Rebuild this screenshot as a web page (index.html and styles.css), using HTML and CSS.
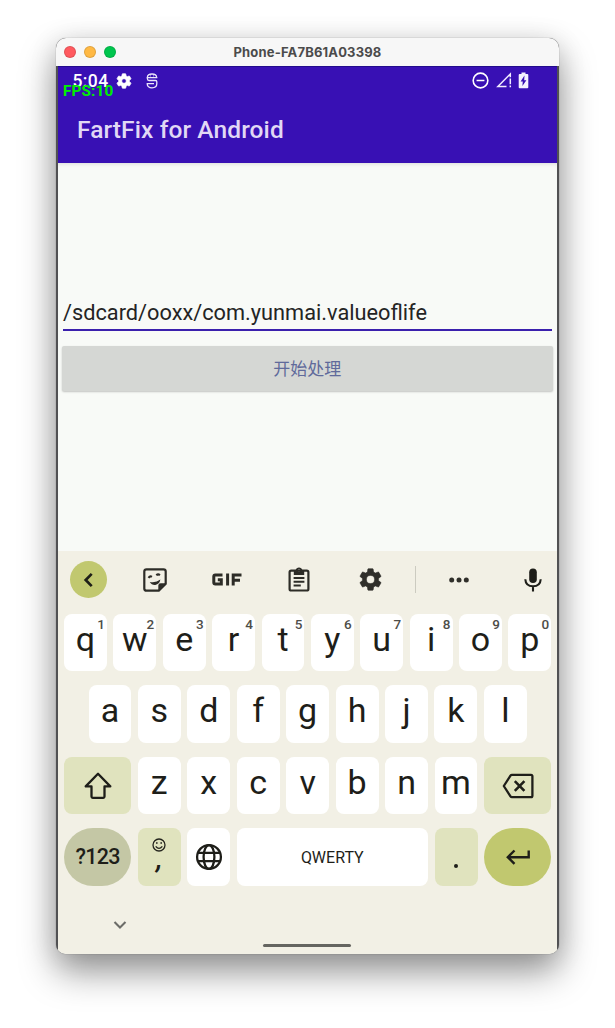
FILE: index.html
```html
<!DOCTYPE html>
<html lang="zh">
<head>
<meta charset="utf-8">
<title>Phone-FA7B61A03398</title>
<link rel="stylesheet" href="styles.css">
</head>
<body>
<main class="window">
  <header class="titlebar">
    <div class="lights"><i class="light red"></i><i class="light amber"></i><i class="light green"></i></div>
    <div class="window-title">Phone-FA7B61A03398</div>
  </header>
  <div class="screen">
    <section class="appbar">
      <div class="status">
        <span class="clock">5:04</span>
        <svg class="st-gear" width="18" height="18" viewBox="0 0 24 24"><path fill="#fff" d="M19.14 12.94c.04-.3.06-.61.06-.94s-.02-.64-.07-.94l2.03-1.58c.18-.14.23-.41.12-.61l-1.92-3.32c-.12-.22-.37-.29-.59-.22l-2.39.96c-.5-.38-1.03-.7-1.62-.94L14.4 2.81c-.04-.24-.24-.41-.48-.41h-3.84c-.24 0-.43.17-.47.41L9.25 5.35c-.59.24-1.13.57-1.62.94l-2.39-.96c-.22-.08-.47 0-.59.22L2.74 8.87c-.12.21-.08.47.12.61l2.03 1.58c-.05.3-.09.63-.09.94s.02.64.07.94l-2.03 1.58c-.18.14-.23.41-.12.61l1.92 3.32c.12.22.37.29.59.22l2.39-.96c.5.38 1.03.7 1.62.94l.36 2.54c.05.24.24.41.48.41h3.84c.24 0 .44-.17.47-.41l.36-2.54c.59-.24 1.13-.56 1.62-.94l2.39.96c.22.08.47 0 .59-.22l1.92-3.32c.12-.22.07-.47-.12-.61l-2.01-1.58zM12 15.1A3.1 3.1 0 1 1 12 8.900a3.100 3.100 0 0 1 0 6.200z" stroke="#fff"/></svg>
        <svg class="st-s" width="12" height="16" viewBox="0 0 12 16" fill="none" stroke="#ece6fa" stroke-width="1.3"><path d="M10.6 4.700V4.200C10.600 2.200 9 1 6 1S1.400 2.200 1.400 4.200v1.600c0 1 .6 1.700 1.600 1.700h6.600c.8 0 1.200.5 1.200 1.300v2c0 2.600-2 4-4.800 4s-4.800-1.400-4.800-4.100M.6 4.700h10.800M.6 10.700h7.400"/><path d="M4 2.900h.8M7.200 2.900H8" stroke-width="1"/></svg>
        <span class="status-right">
          <svg width="17" height="17" viewBox="0 0 16 16" fill="none" stroke="#fff" stroke-width="1.500"><circle cx="8" cy="8" r="6.900"/><path d="M4.300 8h7.400"/></svg>
          <svg width="16" height="16" viewBox="0 0 16 16" fill="none" stroke="#f1ecff" stroke-width="1.500"><path d="M10.500 14.500H1.900L14.300 2v3.300M14.300 6.500v5.700M14.300 13.500v1.700"/></svg>
          <svg width="11" height="17" viewBox="0 0 10 17"><path fill="#f5f1ff" d="M3 .5h4V2h1.800q1 0 1 1v12.200q0 1-1 1H1.200q-1 0-1-1V3q0-1 1-1H3z"/><path fill="#3810b4" d="M6 3.500 2.100 9.600h2.200L3.900 14 7.900 8.200H5.700z"/></svg>
        </span>
        <span class="fps">FPS:10</span>
      </div>
      <h1 class="app-title">FartFix for Android</h1>
    </section>
    <section class="content">
      <div class="field">/sdcard/ooxx/com.yunmai.valueoflife</div>
      <div class="button">开始处理</div>
    </section>
    <section class="keyboard">
      <div class="tools">
        <span class="back"><svg width="36" height="36" viewBox="0 0 36 36" fill="none" stroke="#1e1e18" stroke-width="2.700"><path d="m20.700 11.900-6 6.100 6 6.100"/></svg></span>
        <svg class="t-sticker" width="24" height="24" viewBox="0 0 24 24"><path d="M3.500 1.300h17q2.200 0 2.200 2.200v12.300l-6.900 6.900H3.500q-2.200 0-2.200-2.200v-17q0-2.200 2.200-2.200z" fill="none" stroke="#2d2c27" stroke-width="2.200"/><path d="M22.500 15.300h-4.800q-2.400 0-2.400 2.400v4.800z" fill="#2d2c27"/><path d="M5.500 9.800q1.600-2.200 3.400-1M13.300 7.300q1.800-1.700 3.600-.1" fill="none" stroke="#2d2c27" stroke-width="2.100"/><path d="M6.800 13.900q6 1.200 10.600-2.300-1 4.900-5.100 5.300-3.800.2-5.500-3z" fill="#2d2c27"/></svg>
        <svg class="t-gif" width="30" height="13" viewBox="0 0 30 13" fill="none" stroke="#2d2c27" stroke-width="3"><path d="M10.500 2H3.200q-1.400 0-1.400 1.400v6.200Q1.800 11 3.200 11h6.100V6.700H5.800M15.600.5v12M21.200 12.500V2h8.300M21 7.200h7"/></svg>
        <svg class="t-clip" width="22" height="25" viewBox="0 0 22 25"><rect x="1.600" y="3.700" width="18.800" height="19.800" rx="1.600" fill="none" stroke="#2d2c27" stroke-width="2.200"/><path fill="#2d2c27" fill-rule="evenodd" d="M5.800 3h1.900C8 1.500 9.300.4 11 .4S14 1.500 14.300 3h1.900v5H5.800zM11 2.300a1.100 1.100 0 1 0 0 2.200 1.100 1.100 0 0 0 0-2.200z"/><path d="M5.600 11h10.800M5.600 14.800h10.800M5.600 18.600h7.200" stroke="#2d2c27" stroke-width="2"/></svg>
        <svg class="t-gear" width="27" height="27" viewBox="0 0 24 24"><path fill="#302f2a" d="M19.140 12.940c.04-.3.06-.61.06-.94s-.02-.64-.07-.94l2.030-1.580c.18-.14.23-.41.12-.61l-1.920-3.320c-.12-.22-.37-.29-.59-.22l-2.390.96c-.5-.38-1.030-.7-1.620-.94L14.400 2.810c-.04-.24-.24-.41-.48-.41h-3.840c-.24 0-.43.17-.47.41L9.250 5.350c-.59.24-1.130.57-1.620.94l-2.390-.96c-.22-.08-.47 0-.59.22L2.740 8.870c-.12.21-.08.47.12.61l2.030 1.580c-.05.3-.09.63-.09.94s.02.64.07.94l-2.030 1.580c-.18.14-.23.41-.12.61l1.920 3.320c.12.22.37.29.59.22l2.390-.96c.5.38 1.030.7 1.620.94l.36 2.540c.05.24.24.41.48.41h3.840c.24 0 .44-.17.47-.41l.36-2.540c.59-.24 1.130-.56 1.620-.94l2.390.96c.22.08.47 0 .59-.22l1.920-3.320c.12-.22.07-.47-.12-.61l-2.010-1.580zM12 15.600A3.600 3.600 0 1 1 12 8.400a3.600 3.600 0 0 1 0 7.200z" stroke="#302f2a" stroke-width=".5"/></svg>
        <i class="divider"></i>
        <svg class="t-dots" width="20" height="6" viewBox="0 0 20 6" fill="#302f2a"><circle cx="2.700" cy="3" r="2.500"/><circle cx="10" cy="3" r="2.500"/><circle cx="17.300" cy="3" r="2.500"/></svg>
        <svg class="t-mic" width="18" height="24" viewBox="0 0 18 24"><rect x="5.200" y=".5" width="7.600" height="14.500" rx="3.800" fill="#1e1e19"/><path d="M1.300 11.200q.4 7 7.700 7t7.700-7M9 18v5.500" fill="none" stroke="#1e1e19" stroke-width="2.100"/></svg>
      </div>
      <div class="rows">
        <div class="row">
          <span class="key">q<small>1</small></span><span class="key">w<small>2</small></span><span class="key">e<small>3</small></span><span class="key">r<small>4</small></span><span class="key">t<small>5</small></span><span class="key">y<small>6</small></span><span class="key">u<small>7</small></span><span class="key">i<small>8</small></span><span class="key">o<small>9</small></span><span class="key">p<small>0</small></span>
        </div>
        <div class="row inset">
          <span class="key">a</span><span class="key">s</span><span class="key">d</span><span class="key">f</span><span class="key">g</span><span class="key">h</span><span class="key">j</span><span class="key">k</span><span class="key">l</span>
        </div>
        <div class="row">
          <span class="key wide tint"><svg width="28" height="28" viewBox="0 0 28 28" fill="none" stroke="#1e1e19" stroke-width="2.300" stroke-linejoin="round"><path d="M14 1.800 1.700 14.400h5.800v10.200q0 1.200 1.200 1.200h10.600q1.200 0 1.200-1.200V14.400h5.800z"/></svg></span>
          <span class="key">z</span><span class="key">x</span><span class="key">c</span><span class="key">v</span><span class="key">b</span><span class="key">n</span><span class="key">m</span>
          <span class="key wide tint"><svg width="32" height="26" viewBox="0 0 32 26" fill="none" stroke="#1e1e19" stroke-width="2.300" stroke-linejoin="round"><path d="M10 1.800h19q1.400 0 1.400 1.400v19.600q0 1.400-1.400 1.400H10q-1 0-1.500-.8L1.800 13l6.700-10.400q.5-.8 1.500-.8z"/><path d="m12.800 8.200 9.600 9.600m0-9.600-9.600 9.600" stroke-width="2.600"/></svg></span>
        </div>
        <div class="row">
          <span class="key wide pill sym">?123</span>
          <span class="key tint comma"><svg width="14" height="14" viewBox="0 0 14 14" fill="none" stroke="#24241d" stroke-width="1.300"><circle cx="7" cy="7" r="6"/><path d="M3.700 8.300q3.300 4 6.600 0"/><path d="M4.800 4.200v1.600M9.200 4.200v1.600" stroke-width="1.600"/></svg><b>,</b></span>
          <span class="key"><svg width="28" height="28" viewBox="0 0 28 28" fill="none" stroke="#1e1e19" stroke-width="2.300"><circle cx="14" cy="14" r="11.900"/><ellipse cx="14" cy="14" rx="5.400" ry="11.900"/><path d="M3 9.800h22M3 18.200h22"/></svg></span>
          <span class="key space">QWERTY</span>
          <span class="key tint dot"><i></i></span>
          <span class="key wide pill enter"><svg width="24" height="16" viewBox="0 0 24 16" fill="none" stroke="#1e1e19" stroke-width="2.400"><path d="M22.700 1.500v6.700H2M8.500 1.500 1.800 8.200l6.700 6.700"/></svg></span>
        </div>
      </div>
      <div class="nav">
        <svg class="chev" width="14" height="10" viewBox="0 0 14 10" fill="none" stroke="#6c6c68" stroke-width="2.100"><path d="m1.500 2 5.500 5.500L12.500 2"/></svg>
        <i class="handle"></i>
      </div>
    </section>
  </div>
</main>
</body>
</html>
```

FILE: styles.css
```css
* { box-sizing: border-box; }
body { margin: 0; padding: 38px 56px 0; height: 1028px; background: #fff; overflow: hidden; font-family: Roboto, "Noto Sans CJK SC", sans-serif; }
svg { display: block; flex: none; }
.window { width: 503px; height: 916px; border-radius: 10px; overflow: hidden; background: #515153; box-shadow: 0 0 1px rgba(0,0,0,.55), 0 18px 36px rgba(0,0,0,.4), 0 4px 28px rgba(0,0,0,.12); }
.titlebar { position: relative; height: 28px; background: #f7f7f7; display: flex; align-items: center; justify-content: center; }
.lights { position: absolute; left: 8px; top: 8px; display: flex; gap: 8px; }
.light { width: 12px; height: 12px; border-radius: 50%; border: .5px solid rgba(0,0,0,.12); }
.red { background: #ff5a5f; }
.amber { background: #ffb944; }
.green { background: #00c64e; }
.window-title { font: 700 13px/27px Inter, sans-serif; color: #4b4b4b; letter-spacing: .17px; }
.screen { margin: 0 2px 0 1.5px; height: 888px; display: flex; flex-direction: column; background: #f8faf7; }
.appbar { height: 97px; background: #3810b4; border-top: 1px solid #220c8c; flex: none; }
.status { position: relative; height: 34px; padding: 5px 28px 0 15px; display: flex; align-items: flex-start; }
.clock { font: 500 17.5px/18px Roboto, sans-serif; color: #fff; width: 36px; letter-spacing: .4px; }
.st-gear { margin-left: 6px; }
.st-s { margin: 1px 0 0 13px; }
.status-right { margin-left: auto; display: flex; gap: 6.5px; }
.fps { position: absolute; left: 5.5px; top: 15px; font: 700 15.3px/18px Roboto, sans-serif; color: #00f000; letter-spacing: .15px; }
.app-title { margin: 13px 0 0 19.5px; font: 500 24.5px/32px Roboto, sans-serif; color: #e1d8f5; letter-spacing: .1px; }
.content { height: 388px; flex: none; padding: 132px 4.5px 0; box-shadow: inset 0 4px 4px -3px rgba(0,0,0,.12); }
.field { height: 36px; margin: 0 1px; border-bottom: 2.5px solid #3a20ad; font-size: 21.75px; line-height: 35px; color: #242424; white-space: nowrap; }
.button { margin-top: 15px; height: 45px; border-radius: 2px; background: #d5d7d4; box-shadow: 0 1px 2px rgba(0,0,0,.22); text-align: center; font: 17px/44px "Noto Sans CJK SC", sans-serif; color: #606a9b; }
.keyboard { flex: 1; background: #f2f0e5; display: flex; flex-direction: column; }
.tools { height: 63px; padding: 0 15px 6px 12.5px; display: flex; align-items: center; flex: none; }
.back { width: 37px; height: 37px; border-radius: 50%; background: #c1c86f; display: grid; place-items: center; }
.t-sticker { margin-left: 36px; }
.t-gif { margin-left: 44.5px; }
.t-clip { margin-left: 46px; }
.t-gear { margin-left: 47.5px; }
.divider { width: 1px; height: 27px; background: #cccbc0; margin-left: 31px; }
.t-dots { margin-left: 33px; }
.t-mic { margin-left: auto; }
.rows { display: flex; flex-direction: column; gap: 14.2px; padding: 0 5.7px 0 6.5px; }
.row { display: flex; gap: 6.5px; height: 57.3px; }
.inset { padding: 0 24.5px; }
.key { position: relative; flex: 1 1 0; min-width: 0; height: 100%; border-radius: 8px; background: #fff; color: #1e1e19; font-size: 34px; line-height: 50px; text-align: center; display: flex; justify-content: center; }
.key > svg { align-self: center; }
.key small { position: absolute; right: 2px; top: 1px; font: 500 13.5px/18px Roboto, sans-serif; color: #4d4d48; }
.wide { flex: 0 0 67.3px; }
.tint { background: #e0e3be; }
.pill { border-radius: 29px; }
.sym { background: #c4c7a5; font-size: 21.5px; font-weight: 500; line-height: 57px; letter-spacing: -.7px; }
.comma { flex-direction: column; align-items: center; justify-content: flex-start; padding-top: 10px; }
.comma b { font: italic 700 26px/20px Roboto, sans-serif; margin-top: -3px; }
.space { flex: 0 0 191.6px; font-size: 16px; line-height: 59px; }
.dot i { width: 4.5px; height: 4.5px; border-radius: 50%; background: #1e1e19; margin-top: 35.5px; }
.enter { background: #c1c86f; }
.nav { position: relative; flex: 1; display: flex; justify-content: center; align-items: flex-end; padding-bottom: 7.5px; }
.chev { position: absolute; left: 55.5px; top: 34px; }
.handle { width: 88px; height: 3px; border-radius: 2px; background: #656560; }
```
